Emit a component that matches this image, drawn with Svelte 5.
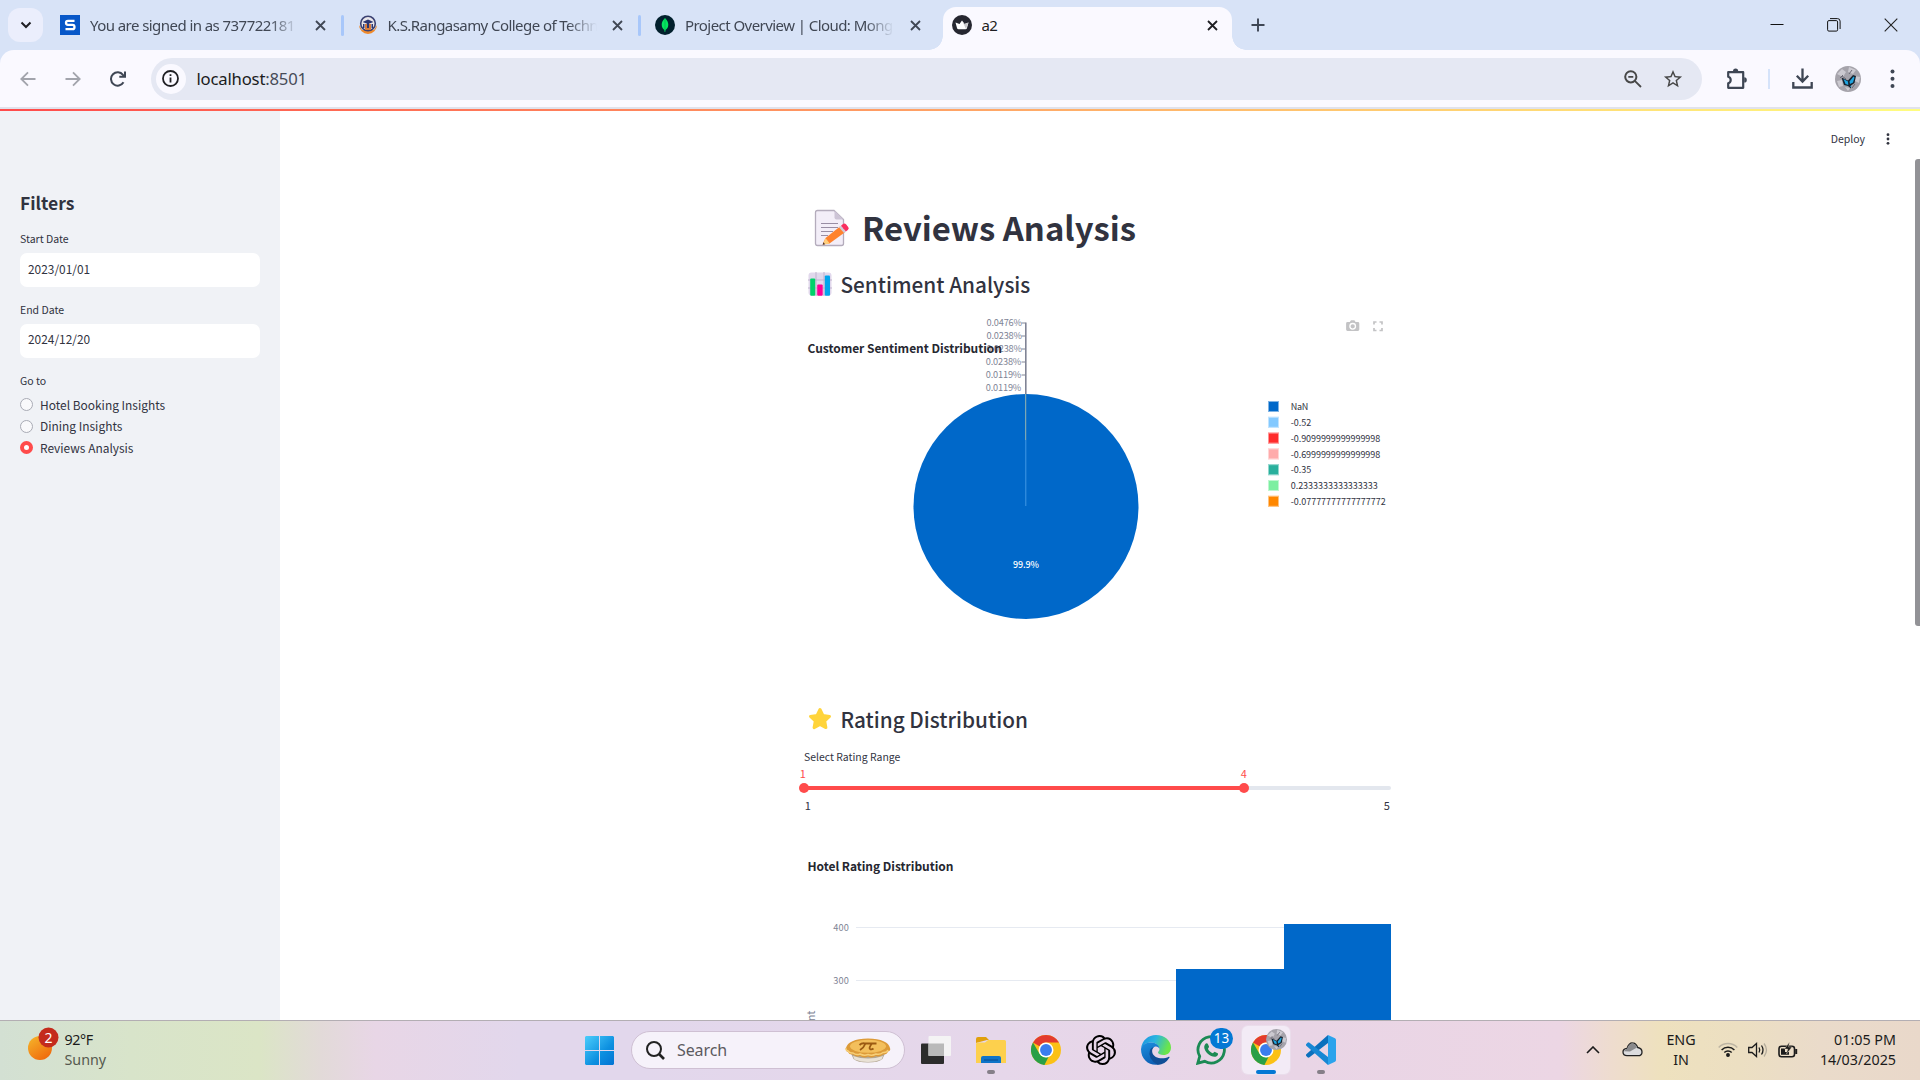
<script>
  const tabs = [
    { title: 'You are signed in as 737722181', icon: 's' },
    { title: 'K.S.Rangasamy College of Techn', icon: 'ksr' },
    { title: 'Project Overview | Cloud: Mong', icon: 'mongo' },
    { title: 'a2', icon: 'crown', active: true },
  ];
  const pages = ['Hotel Booking Insights', 'Dining Insights', 'Reviews Analysis'];
  const sliceLabels = ['0.0476%', '0.0238%', '0.0238%', '0.0238%', '0.0119%', '0.0119%'];
  const legend = [
    { name: 'NaN', color: '#0068c9', w: 17.5 },
    { name: '-0.52', color: '#83c9ff', w: 20.5 },
    { name: '-0.9099999999999998', color: '#ff2b2b', w: 89.5 },
    { name: '-0.6999999999999998', color: '#ffabab', w: 89.5 },
    { name: '-0.35', color: '#29b09d', w: 20.5 },
    { name: '0.2333333333333333', color: '#7defa1', w: 87 },
    { name: '-0.07777777777777772', color: '#ff8700', w: 95 },
  ];
</script>

{#snippet chrome()}
  <svg class="app" viewBox="0 0 48 48">
    <circle cx="24" cy="24" r="24" fill="#fbc116" />
    <path d="M24 0a24 24 0 0 1 20.8 12H24a12 12 0 0 0-10.4 6L3.2 12A24 24 0 0 1 24 0z" fill="#e33b2e" />
    <path d="M3.2 12 13.6 30A12 12 0 0 0 24 36h1.500L22 48A24 24 0 0 1 3.200 12z" fill="#2a9f47" />
    <path d="M34.400 30 24 48h-2.500l-3-9 5.500-3a12 12 0 0 0 10.400-6z" fill="#fbc116" />
    <path d="M13.600 30 A12 12 0 0 0 28 35.300L21.500 47.900 10 40z" fill="#2a9f47" />
    <circle cx="24" cy="24" r="12" fill="#fff" />
    <circle cx="24" cy="24" r="9.500" fill="#3b7ded" />
  </svg>
{/snippet}

{#snippet avatar()}
  <svg viewBox="0 0 26 26">
    <circle cx="13" cy="13" r="13" fill="#a5a3ab" />
    <path d="M2 8l5-5 4 3-3 5zM14 1l7 3-3 4-5-2zM19 10l6 1-1 6-4-2zM2 15l5-1 1 6-4 1zM10 21l5 1-2 3z" fill="#cbc9d0" />
    <path d="M7 10l4 3M17 4l-3 4M5 12l3-3M20 18l-3 4" stroke="#6b6975" stroke-width="1" />
    <path d="M6.500 11.500l6.500 3 5-5.500 3 1-1.500 7-3.500 2.500 0 3-3-2.500-4-1z" fill="#17232f" />
    <path d="M8.500 13l4.500 2.500 .3 3.500-2.800-1zM14.500 15.500l4-5 1 1-1.500 5-3 1.500zM15 20l1.500-.5-.5 2z" fill="#21a5e0" />
  </svg>
{/snippet}

<div class="screen">
  <div class="tabstrip">
    <div class="tabsearch"><svg width="12" height="8" viewBox="0 0 12 8"><path d="M1.500 1.500 6 6l4.500-4.500" fill="none" stroke="#1f1f23" stroke-width="2" /></svg></div>
    {#each tabs as t, i}
      <div class="tab" class:active={t.active}>
        <span class="fav">
          {#if t.icon === 's'}
            <svg viewBox="0 0 20 20"><path d="M0 0h20v20H0z" fill="#0757c8" /><path d="M14.500 5.800H8q-2 0-2 2t2 2h4.500q2 0 2 2.200t-2 2.200H5.500" fill="none" stroke="#fff" stroke-width="2.300" /></svg>
          {:else if t.icon === 'ksr'}
            <svg viewBox="0 0 20 20"><path d="M1 10a9 9 0 0 0 18 0l-3 5H4z" fill="#ef8a2c" /><circle cx="10" cy="8.500" r="7.300" fill="#e9e6ea" stroke="#3c4272" stroke-width="1.600" /><path d="M4.500 7 10 4.500 15.500 7 10 9z" fill="#2c3672" /><path d="M7 9h6v6H7z" fill="#d67b3d" /><path d="M9 8h2v5H9zM5 9h1.500v4H5zM13.500 9H15v4h-1.500z" fill="#2c3672" /></svg>
          {:else if t.icon === 'mongo'}
            <svg viewBox="0 0 20 20"><circle cx="10" cy="10" r="10" fill="#02202d" /><path d="M10 3c2.200 2.200 3.300 4.400 3.300 6.800 0 2.500-1.300 4.200-2.800 5.200L10.200 17h-.5l-.3-2C8 14 6.700 12.300 6.700 9.800 6.700 7.400 7.800 5.200 10 3z" fill="#05e660" /><path d="M10 4v11" stroke="#04a94c" stroke-width=".6" /></svg>
          {:else}
            <svg viewBox="0 0 20 20"><circle cx="10" cy="10" r="10" fill="#262730" /><path d="M3.500 7.500 7.500 9 10 5.500 12.500 9l4-1.500L15 13q-.3 1.200-1.500 1.200h-7Q5.300 14.200 5 13z" fill="#fff" /><path d="M10 5.500 12.500 9l4-1.500L14 14z" fill="#c9c9cc" /></svg>
          {/if}
        </span>
        <span class="title title{i}">{t.title}</span>
        <svg class="x" width="11" height="11" viewBox="0 0 11 11"><path d="M1 1l9 9M10 1l-9 9" stroke="currentColor" stroke-width="1.800" /></svg>
      </div>
    {/each}
    <svg class="plus" width="14" height="14" viewBox="0 0 14 14"><path d="M7 .500v13M.500 7h13" stroke="#3e4654" stroke-width="1.900" /></svg>
    <div class="winctl">
      <svg width="14" height="14" viewBox="0 0 14 14"><path d="M.500 6.500h13" stroke="#111" /></svg>
      <svg width="14" height="14" viewBox="0 0 14 14" fill="none" stroke="#111"><rect x=".600" y="2.600" width="10" height="10.500" rx="1.300" /><path d="M3 .6h7.500q2.600 0 2.600 2.600v7.800" /></svg>
      <svg width="14" height="14" viewBox="0 0 14 14"><path d="M.700.700l12.600 12.600M13.300.700.700 13.300" stroke="#222" stroke-width="1.100" /></svg>
    </div>
  </div>

  <div class="toolbar">
    <div class="nav">
      <svg width="16" height="16" viewBox="0 0 16 16" fill="none" stroke="#a2a4ac" stroke-width="1.800"><path d="M15.500 8H1.500M8 1.300 1.300 8 8 14.700" /></svg>
      <svg width="16" height="16" viewBox="0 0 16 16" fill="none" stroke="#a2a4ac" stroke-width="1.800"><path d="M.500 8h14M8 1.300 14.700 8 8 14.700" /></svg>
      <svg width="16" height="16" viewBox="0 0 16 16" fill="none" stroke="#3e4654" stroke-width="2"><path d="M13.500 11.300A6.700 6.700 0 1 1 13 3.800l1.500 1.800M15 .500v5.300H9.300" /></svg>
    </div>
    <div class="omni">
      <span class="info"><svg width="17" height="17" viewBox="0 0 17 17"><circle cx="8.500" cy="8.500" r="7.500" fill="none" stroke="#1f1f23" stroke-width="1.800" /><path d="M7.600 7.500h1.800v5H7.600zM7.600 4.300h1.800v1.800H7.600z" fill="#1f1f23" /></svg></span>
      <span class="url"><b>localhost</b>:8501</span>
      <svg class="mag" width="18" height="18" viewBox="0 0 18 18" fill="none" stroke="#474747" stroke-width="2"><circle cx="6.800" cy="6.800" r="5.600" /><path d="M10.800 10.800l6.200 6.200M4.300 6.800h5" stroke-width="1.800" /></svg>
      <svg width="20" height="20" viewBox="1 1 22 22" fill="#474747"><path d="M22 9.240l-7.190-.620L12 2 9.190 8.630 2 9.240l5.460 4.730L5.820 21 12 17.270 18.180 21l-1.630-7.030L22 9.240zM12 15.400l-3.760 2.270 1-4.280-3.320-2.880 4.380-.380L12 6.100l1.710 4.040 4.380.380-3.320 2.880 1 4.280L12 15.400z" /></svg>
    </div>
    <svg class="puzzle" width="22" height="22" viewBox="0 0 22 22"><path d="M2.200 4.200H17.200V19.800H2.200V15.200a3.300 3.300 0 0 0 0-6.400z" fill="none" stroke="#3e4654" stroke-width="2.200" stroke-linejoin="round" /><path d="M7 3.200a2.600 2.600 0 0 1 5.200 0zM18.200 9.300a2.600 2.600 0 0 1 0 5.200z" fill="#3e4654" /></svg>
    <i class="tsep"></i>
    <svg class="dl" width="21" height="21" viewBox="0 0 21 21" fill="none" stroke="#3e4654" stroke-width="2.300"><path d="M10.500.500v12.500M4.800 7.800l5.700 5.700 5.700-5.700M1.300 14v5.500h18.400V14" /></svg>
    <span class="ava">{@render avatar()}</span>
    <svg class="kebab" width="5" height="20" viewBox="0 0 5 20" fill="#3e4654"><circle cx="2.500" cy="2.500" r="2" /><circle cx="2.500" cy="9.800" r="2" /><circle cx="2.500" cy="17" r="2" /></svg>
  </div>
  <div class="rule"></div>
  <div class="deco"></div>

  <div class="body">
    <aside>
      <h2>Filters</h2>
      <label for="start">Start Date</label>
      <div class="field" id="start">2023/01/01</div>
      <label for="end">End Date</label>
      <div class="field end" id="end">2024/12/20</div>
      <p class="goto">Go to</p>
      {#each pages as p, i}
        <div class="radio"><i class:on={i === 2}></i><span class="r{i}">{p}</span></div>
      {/each}
    </aside>

    <main>
      <div class="column">
        <h1>
          <svg width="36" height="38" viewBox="0 0 36 38"><path d="M3.500 1.500H20L29.500 10.500V34.500q0 2-2 2h-24q-2 0-2-2v-31q0-2 2-2z" fill="#f3eef8" stroke="#b4acbc" stroke-width="1.300" /><path d="M20.500 1.500v7q0 2 2 2h7z" fill="#cdc4d6" /><path d="M7 14.500h17M7 18.500h17M7 22.500h12M7 26.500h7" stroke="#998ea4" stroke-width="1.200" /><path d="M11.500 29 26 17.500l5 5.800L15.500 34.500 8.500 35.500z" fill="#ff822d" /><path d="M11.500 29l4.300 5.400-7 1.400z" fill="#ffce7c" /><path d="M9.400 33.300l1.700 1.900-2.400.6z" fill="#402a32" /><path d="M25 18.300l2-1.600 5 6-2 1.400z" fill="#d3cbd8" /><path d="M27 16.700l2-1.600q1.700-1.300 3.200.4l2 2.400q1.300 1.600-.4 3l-1.900 1.500z" fill="#f92f60" /></svg>
          <span>Reviews Analysis</span>
        </h1>
        <h3 class="sent">
          <svg width="24" height="24" viewBox="0 0 24 24"><rect x=".500" y=".500" width="23" height="23" rx="3" fill="#e1d8ec" /><path d="M8 0v24M16 0v24M0 8h24M0 16h24" stroke="#c0b3ce" /><rect x="2.200" y="6.500" width="5" height="17.300" rx="1" fill="#00d26a" /><rect x="9.200" y="12.500" width="5.500" height="11.300" rx="1" fill="#ff0095" /><rect x="16.800" y="3.500" width="5.200" height="20.300" rx="1" fill="#00a6ed" /></svg>
          <span>Sentiment Analysis</span>
        </h3>
        <svg class="pie" width="587" height="388" viewBox="804 311 587 388">
          <g class="tick">
            {#each sliceLabels as l, i}
              <text x={986.5 - (i > 2 ? 0.7 : 0)} y={326.3 + i * 13} textLength="35.500">{l}</text>
              {#if i < 5}<path d="M1021.500 {323 + i * 13}h4" stroke="#808495" />{/if}
            {/each}
          </g>
          <path d="M1025.800 322.500V395" stroke="#808495" stroke-width="1.600" />
          <text class="ctitle" x="807.500" y="353" textLength="194.500">Customer Sentiment Distribution</text>
          <circle cx="1026" cy="506.500" r="112.500" fill="#0068c9" />
          <path d="M1025.700 394V440" stroke="#a9bfae" stroke-width=".9" />
          <path d="M1025.800 440V506" stroke="#83c9ff" stroke-width=".5" />
          <text class="pct" x="1013" y="567.500" textLength="26">99.9%</text>
          <g fill="#c3c3c5">
            <path d="M1347.500 322h2.300l1.200-1.700h3.400l1.200 1.700h2.300q1.400 0 1.400 1.400v6.200q0 1.400-1.400 1.400h-10.400q-1.400 0-1.400-1.400v-6.200q0-1.400 1.400-1.400z" />
            <circle cx="1352.700" cy="326.300" r="2.800" fill="none" stroke="#fff" stroke-width="1.300" />
          </g>
          <path d="M1374 324.500V322h2.500M1379.500 322h2.500v2.500M1382 328v2.500h-2.500M1376.500 330.500h-2.500V328" fill="none" stroke="#c3c3c5" stroke-width="1.700" />
          {#each legend as l, i}
            <rect x="1268" y={401 + i * 15.8} width="11" height="11" fill={l.color} />
            <rect x="1268.500" y={401.5 + i * 15.8} width="10" height="10" fill="none" stroke="#fff" stroke-opacity=".5" />
            <text class="leg" x="1290.700" y={410.2 + i * 15.8} textLength={l.w}>{l.name}</text>
          {/each}
        </svg>
        <h3 class="rate">
          <svg width="24" height="24" viewBox="0 0 24 24"><path d="M12 2.500l2.900 6 6.600.9-4.800 4.600 1.200 6.600L12 17.500l-5.900 3.100 1.200-6.600-4.800-4.600 6.600-.9z" fill="#ffd43b" stroke="#ffd43b" stroke-width="3" stroke-linejoin="round" /></svg>
          <span>Rating Distribution</span>
        </h3>
        <div class="slabel">Select Rating Range</div>
        <svg class="slider" width="597" height="50" viewBox="799 766 597 50">
          <path d="M1244 788H1389" stroke="#e3e7ee" stroke-width="4" stroke-linecap="round" />
          <path d="M804 788H1244" stroke="#ff4b4b" stroke-width="4" />
          <circle cx="804" cy="788" r="5" fill="#ff4b4b" />
          <circle cx="1244" cy="788" r="5" fill="#ff4b4b" />
          <text x="799.700" y="778" fill="#ff4b4b">1</text>
          <text x="1240.700" y="778" fill="#ff4b4b">4</text>
          <text x="804.700" y="810" fill="#31333f">1</text>
          <text x="1383.700" y="810" fill="#31333f">5</text>
        </svg>
        <svg class="hist" width="587" height="170" viewBox="804 850 587 170">
          <text class="ctitle" x="807.500" y="870.700" textLength="146">Hotel Rating Distribution</text>
          <path d="M856 927.500H1391M856 980.500H1391" stroke="#e6eaf1" stroke-width="1.200" />
          <text class="tick" x="833.300" y="931" textLength="15.500">400</text>
          <text class="tick" x="833.300" y="984" textLength="15.500">300</text>
          <path d="M1176 1020V969H1284V924H1391V1020z" fill="#0068c9" />
          <text class="axis" transform="translate(815 1010.500) rotate(-90)" text-anchor="end">count</text>
        </svg>
      </div>
      <div class="deploy"><span>Deploy</span><svg width="4" height="12" viewBox="0 0 4 12" fill="#31333f"><circle cx="2" cy="1.700" r="1.400" /><circle cx="2" cy="6" r="1.400" /><circle cx="2" cy="10.300" r="1.400" /></svg></div>
      <i class="scroll"></i>
    </main>
  </div>

  <footer>
    <div class="weather">
      <svg width="34" height="34" viewBox="0 0 34 34"><defs><linearGradient id="sun" x1="0" y1="0" x2=".7" y2="1"><stop offset="0" stop-color="#f5b82c" /><stop offset="1" stop-color="#f06a0c" /></linearGradient></defs><circle cx="14" cy="21" r="12" fill="url(#sun)" /><circle cx="22.500" cy="10.500" r="10" fill="#c42b1c" /><text x="22.500" y="15.500" text-anchor="middle" fill="#fff" font-size="14">2</text></svg>
      <div><p class="temp">92°F</p><p class="cond">Sunny</p></div>
    </div>
    <div class="apps">
      <svg class="win" width="29" height="29" viewBox="0 0 29 29"><defs><linearGradient id="w" x1="0" y1="0" x2="1" y2="1"><stop offset="0" stop-color="#4ccdfb" /><stop offset=".6" stop-color="#0d90e0" /><stop offset="1" stop-color="#0373d3" /></linearGradient></defs><path d="M1 0h13v14H0V1zM15 0h13l1 1v13H15zM0 15h14v14H1l-1-1zM15 15h14v13l-1 1H15z" fill="url(#w)" /></svg>
      <div class="search">
        <svg width="19" height="19" viewBox="0 0 19 19" fill="none" stroke="#222" stroke-width="2"><circle cx="8" cy="8" r="7" /><path d="M13 13l5 5" stroke-width="2.600" /></svg>
        <span>Search</span>
        <svg class="food" width="46" height="25" viewBox="0 0 46 25"><path d="M4 11h38l-4.500 10q-4 3.500-14.500 3.500T8.500 21z" fill="#b3a793" /><path d="M8 18q15 5 30 0l-1.500 3.500q-13.500 5-27 0z" fill="#e9e2d6" /><path d="M1 10q-1 3 2 4 1 3 5 2.500 3 3 7 1.500 4 2.500 8 .5 4 2 8-.5 4 1.500 7-1.500 4 .5 5-3 3-1 2-3.500Q43 1 23 .500 3 1 1 10z" fill="#dc9a38" /><path d="M1 10q-.5 2.200 2 3 1.500 2.500 5 2 3 2.500 7 1 4 2 8 .5 4 1.500 8-.5 4 1 7-1.500 4 .3 5-2.500" fill="none" stroke="#f7cf78" stroke-width="1.500" /><ellipse cx="23" cy="8.300" rx="18" ry="6.500" fill="#f3bf5c" /><path d="M14.500 7q2-2 5-1.700l12 .2M20.500 5.500q-1.500 4-5.500 6.500M27 5.500q-4 5-1.500 5.800 1.500.4 3-.8" fill="none" stroke="#9b5a12" stroke-width="1.800" /></svg>
      </div>
      <svg class="tv" width="30" height="28" viewBox="0 0 30 28"><rect y="7.500" width="23" height="20.500" rx="1" fill="#2c2c2c" /><rect x="7.500" width="22.500" height="20" rx="1" fill="#f4f3f4" /><path d="M7.500 7.500H23V20H7.500z" fill="#b9b9b9" /></svg>
      <div class="cell">
        <svg class="app" viewBox="0 0 30 30"><path d="M0 4q0-2 2-2h8l3 3h-2L0 8z" fill="#e0a00c" /><path d="M0 9q0-1.500 1.500-1.500H9L12 5h16.500Q30 5 30 6.500V28H0z" fill="#fdd04d" /><path d="M5 28v-5q0-2 2-2h16q2 0 2 2v5z" fill="#0f74c8" /><path d="M8 25h14" stroke="#0b4a8c" /></svg>
        <i class="dot"></i>
      </div>
      <div class="cell">{@render chrome()}</div>
      <div class="cell"><svg class="app" viewBox="0 0 24 24"><path d="M22.2819 9.8211a5.9847 5.9847 0 0 0-.5157-4.9108 6.0462 6.0462 0 0 0-6.5098-2.9A6.0651 6.0651 0 0 0 4.9807 4.1818a5.9847 5.9847 0 0 0-3.9977 2.9 6.0462 6.0462 0 0 0 .7427 7.0966 5.98 5.98 0 0 0 .511 4.9107 6.051 6.051 0 0 0 6.5146 2.9001A5.9847 5.9847 0 0 0 13.2599 24a6.0557 6.0557 0 0 0 5.7718-4.2058 5.9894 5.9894 0 0 0 3.9977-2.9001 6.0557 6.0557 0 0 0-.7475-7.0729zm-9.022 12.6081a4.4755 4.4755 0 0 1-2.8764-1.0408l.1419-.0804 4.7783-2.7582a.7948.7948 0 0 0 .3927-.6813v-6.7369l2.02 1.1686a.071.071 0 0 1 .038.052v5.5826a4.504 4.504 0 0 1-4.4945 4.4944zm-9.6607-4.1254a4.4708 4.4708 0 0 1-.5346-3.0137l.142.0852 4.783 2.7582a.7712.7712 0 0 0 .7806 0l5.8428-3.3685v2.3324a.0804.0804 0 0 1-.0332.0615L9.74 19.9502a4.4992 4.4992 0 0 1-6.1408-1.6464zM2.3408 7.8956a4.485 4.485 0 0 1 2.3655-1.9728V11.6a.7664.7664 0 0 0 .3879.6765l5.8144 3.3543-2.0201 1.1685a.0757.0757 0 0 1-.071 0l-4.8303-2.7865A4.504 4.504 0 0 1 2.3408 7.872zm16.5963 3.8558L13.1038 8.364 15.1192 7.2a.0757.0757 0 0 1 .071 0l4.8303 2.7913a4.4944 4.4944 0 0 1-.6765 8.1042v-5.6772a.79.79 0 0 0-.407-.667zm2.0107-3.0231l-.142-.0852-4.7735-2.7818a.7759.7759 0 0 0-.7854 0L9.409 9.2297V6.8974a.0662.0662 0 0 1 .0284-.0615l4.8303-2.7866a4.4992 4.4992 0 0 1 6.6802 4.66zM8.3065 12.863l-2.02-1.1638a.0804.0804 0 0 1-.038-.0567V6.0742a4.4992 4.4992 0 0 1 7.3757-3.4537l-.142.0805L8.704 5.459a.7948.7948 0 0 0-.3927.6813zm1.0976-2.3654l2.602-1.4998 2.6069 1.4998v2.9994l-2.5974 1.4997-2.6067-1.4997Z" /></svg></div>
      <div class="cell">
        <svg class="app" viewBox="0 0 30 30"><defs><linearGradient id="e1" x1="0" y1="0" x2="1" y2=".3"><stop offset="0" stop-color="#1a8fe0" /><stop offset=".5" stop-color="#2bb5e0" /><stop offset="1" stop-color="#6be54a" /></linearGradient><linearGradient id="e2" x1="0" y1="0" x2=".4" y2="1"><stop offset="0" stop-color="#1c90df" /><stop offset="1" stop-color="#0d60b5" /></linearGradient></defs>
          <path d="M0 14C1 5 7.500 0 15 0c9 0 15 6 15 12.500 0 5-3.500 7.500-7.500 7.500-3 0-5.500-1-5.500-2.500 0-1 1.500-1.500 1.500-3.500C18.500 11 15 7.500 10 7.500 5 7.500 1.500 10 0 14z" fill="url(#e1)" />
          <path d="M0 14C1 9.500 5 7.300 10 7.500c5 .2 8.500 3 8.500 6.500-.5-1.500-2-2.500-3.500-2.500-2.500 0-4.500 2.500-4.500 6 0 5 4 10 9.500 11.500C10 32 0 26 0 14z" fill="url(#e2)" />
          <path d="M9 15q-1.500 4 .5 8t7 6.800Q24 30 28.500 22.500q.3-1-.7-.7c-6 3-15 1.700-16.500-4.300-.5-2 0-4 1.500-5.500Q10 12.500 9 15z" fill="#0f4f97" />
        </svg>
      </div>
      <div class="cell">
        <svg class="app" viewBox="0 0 30 30"><path d="M1.800 28.200l1.900-6.900A13.200 13.200 0 1 1 8.700 26.300z" fill="none" stroke="#1b8a54" stroke-width="2.800" /><path d="M9 9.500c1-1.800 2.500-1.500 3-.3l1 2.300c.3.800-1.200 2-1 2.500 1 2 2.700 3.500 4.700 4.300.5.200 1.500-1.700 2.300-1.400l2.700 1.300c.8.400.3 2.500-1.500 3.300-4 1.700-12-4-12-9.500 0-1 .3-1.800.8-2.500z" fill="#1b8a54" /></svg>
        <span class="badge">13</span>
      </div>
      <div class="cell current">{@render chrome()}<span class="who">{@render avatar()}</span><i class="dot"></i></div>
      <div class="cell">
        <svg class="app" viewBox="0 0 30 30"><path d="M22 0l7 3.300q1 .5 1 1.700v20q0 1.200-1 1.700L22 30V0z" fill="#2ba3ec" /><path d="M22 0v8L3.500 22.300q-1 .8-2 0L.300 21q-.7-1 0-1.800z" fill="#0b70bd" /><path d="M22 30v-8L3.500 7.700q-1-.8-2 0L.300 9q-.7 1 0 1.800z" fill="#1787d4" /></svg>
        <i class="dot"></i>
      </div>
    </div>
    <div class="tray">
      <svg class="up" width="14" height="8" viewBox="0 0 14 8"><path d="M1 7l6-6 6 6" fill="none" stroke="#1b1b1b" stroke-width="1.600" /></svg>
      <svg class="cloud" width="21" height="15" viewBox="0 0 21 15"><path d="M5 13.700q-4 0-4-3.600 0-3.400 4-3.700Q7 .800 10.500.900q3.300 0 5.200 4.600 4.300.8 4.300 4.400 0 3.800-4 3.800z" fill="#dcdcde" stroke="#222" stroke-width="1.300" /><path d="M5 6.700Q7 1.600 10.500 1.600q3 0 4.500 3.900L8 9.500 2 9.300Q2.500 7 5 6.700z" fill="#8a8a8c" /></svg>
      <div class="lang"><p>ENG</p><p>IN</p></div>
      <svg class="wifi" width="20" height="15" viewBox="0 0 20 15" fill="none" stroke="#1b1b1b" stroke-width="1.500"><path d="M.700 5.500a13 13 0 0 1 18.600 0" stroke="#bdb5a3" /><path d="M3.600 8a9 9 0 0 1 12.800 0M6.300 10.500a5.300 5.300 0 0 1 7.400 0" /><circle cx="10" cy="13" r="1.200" fill="#1b1b1b" /></svg>
      <svg class="vol" width="20" height="16" viewBox="0 0 20 16" fill="none" stroke="#1b1b1b" stroke-width="1.300"><path d="M.700 5.500H4L8.500 1.500v13L4 10.500H.700zM11 5.500q1.500 2.500 0 5M13.500 3.500q3 4.500 0 9" /><path d="M16 1.500q5 6.500 0 13" stroke="#b5ad9c" /></svg>
      <svg class="bat" width="20" height="16" viewBox="0 0 20 16"><rect x="1" y="4.200" width="15.500" height="10.500" rx="2.500" fill="none" stroke="#1b1b1b" stroke-width="1.600" /><path d="M18.200 7v5" stroke="#1b1b1b" stroke-width="2" /><path d="M3 6.500h4v3.500h4v2.800H3z" fill="#1b1b1b" /><path d="M11.500 0 6.500 7h3.200L8.500 12 14 5h-3.500z" fill="#1b1b1b" stroke="#e9dcc5" stroke-width=".4" /></svg>
      <div class="clock"><p class="time">01:05 PM</p><p class="date">14/03/2025</p></div>
    </div>
  </footer>
</div>

<style>
  :global(body) { overflow: hidden; }
  h1, h2, h3, p { margin: 0; }
  .screen { width: 1920px; height: 1080px; display: flex; flex-direction: column; background: #d8e3f7; overflow: hidden; font-family: "Noto Sans", sans-serif; }
  .screen svg { display: block; flex: none; }
  .screen span { white-space: nowrap; }

  .tabstrip { height: 50px; flex: none; display: flex; align-items: center; background: #d8e3f7; }
  .tabsearch { width: 35px; height: 34px; margin: 0 3px 0 8px; border-radius: 12px; background: #ebeefc; display: flex; align-items: center; justify-content: center; flex: none; }
  .tab { width: 297.500px; height: 50px; flex: none; display: flex; align-items: center; position: relative; color: #404754; }
  .tab:nth-child(-n + 4)::after { content: ''; width: 3px; height: 21px; margin-left: auto; border-radius: 2px; background: #a8c7fa; }
  .tab:nth-child(4)::after { background: none; }
  .fav { width: 20px; height: 20px; margin-left: 14px; flex: none; }
  .fav svg { width: 20px; height: 20px; }
  .title { width: 209px; margin-left: 10px; overflow: hidden; font-size: 15px; line-height: 24px; letter-spacing: -.56px; -webkit-mask-image: linear-gradient(90deg, #000 86%, transparent); mask-image: linear-gradient(90deg, #000 86%, transparent); }
  .x { margin-left: 15.500px; }
  .active { width: 289px; height: 43px; margin: 7px 0 0 4px; border-radius: 13px 13px 0 0; background: #faf9ff; color: #1f1f23; }
  .active::before { content: ''; position: absolute; left: -14px; right: -14px; bottom: 0; height: 14px; background: radial-gradient(circle at 0 0, transparent 13.500px, #faf9ff 14px) left / 14px 14px no-repeat, radial-gradient(circle at 100% 0, transparent 13.500px, #faf9ff 14px) right / 14px 14px no-repeat; }
  .active .fav { margin: 0 0 7px 9px; }
  .active .title { width: 214px; margin-bottom: 7px; mask-image: none; -webkit-mask-image: none; }
  .active .x { margin: 0 0 7px 11px; }
  .plus { margin-left: 19px; }
  .winctl { margin-left: auto; padding-right: 22px; display: flex; gap: 43px; }

  .toolbar { height: 57px; flex: none; display: flex; align-items: center; background: #faf9ff; border-radius: 14px 14px 0 0; }
  .nav { width: 150.500px; flex: none; display: flex; gap: 29px; padding-left: 19.500px; box-sizing: border-box; }
  .omni { width: 1551.500px; height: 42px; flex: none; display: flex; align-items: center; border-radius: 21px; background: #e5e8f3; box-sizing: border-box; padding: 0 19.500px 0 5px; }
  .info { width: 30px; height: 30px; border-radius: 50%; background: #faf9ff; display: flex; align-items: center; justify-content: center; }
  .url { margin-left: 11px; font-size: 16.700px; letter-spacing: -.2px; color: #474b57; }
  .url b { font-weight: 400; color: #1a1b20; }
  .mag { margin: 0 21px 0 auto; }
  .puzzle { margin-left: 24px; }
  .tsep { width: 2px; height: 20px; margin: 0 22px 0 20px; background: #d5e3fa; }
  .ava { width: 26px; height: 26px; margin-left: 22px; }
  .kebab { margin-left: 29px; }
  .rule { height: 2px; flex: none; background: #e0e2ec; }
  .deco { height: 2px; flex: none; background: linear-gradient(90deg, #ff4b4b, #fffd80); }

  .body { height: 909px; flex: none; display: flex; font-family: "Noto Sans CJK JP", "Noto Sans CJK SC", sans-serif; color: #31333f; }
  aside { width: 280px; flex: none; padding: 79px 20px 0; box-sizing: border-box; background: #f0f2f6; }
  aside h2 { font-size: 17.500px; font-weight: 600; line-height: 26px; }
  label { display: block; font-size: 10.500px; line-height: 18px; margin-top: 14px; }
  .field { height: 34px; margin-top: 5px; padding-left: 8px; border-radius: 7px; background: #fff; font-size: 11.900px; line-height: 32px; }
  .end { line-height: 30px; }
  .goto { font-size: 10.500px; line-height: 18px; padding-top: 14px; margin-bottom: 4px; }
  .radio { display: flex; align-items: center; height: 21.500px; font-size: 11.950px; line-height: 20px; gap: 7px; }
  .radio i { width: 13px; height: 13px; border-radius: 50%; box-sizing: border-box; border: 1px solid #a9abb5; background: #f9f9fb; }
  .radio i.on { border: 4.500px solid #ff4b4b; background: #fff; }

  main { flex: 1; position: relative; display: flex; justify-content: center; overflow: hidden; background: #fff; }
  .column { width: 587px; padding-right: 5px; height: 909px; display: flex; flex-direction: column; }
  h1 { display: flex; align-items: center; height: 44px; padding: 95px 0 0 10px; font-size: 32.850px; font-weight: 700; line-height: 44px; }
  h1 span { margin: 0 0 3px 12px; }
  h3 { display: flex; align-items: center; height: 32px; flex: none; padding-left: 4px; font-size: 20.750px; font-weight: 500; line-height: 32px; }
  h3 span { margin-left: 8.500px; }
  .sent { margin-top: 18px; }
  .pie { margin-top: 11px; }
  .rate { margin-top: 4px; }
  .slabel { font-size: 10.450px; line-height: 18px; margin: 13px 0 0; }
  .slider { margin: 0 -5px; }
  .slider text { font-size: 11px; }
  .hist { margin-top: 34px; }
  .ctitle { font-size: 12px; font-weight: 700; fill: #262730; }
  .tick { font-size: 9.200px; fill: #808495; }
  .leg { font-size: 9px; fill: #31333f; }
  .pct { font-size: 9px; font-weight: 500; fill: #fff; }
  .axis { font-size: 11px; fill: #808495; }
  .deploy { position: absolute; top: 19px; right: 30px; display: flex; align-items: center; gap: 21px; font-size: 10.500px; line-height: 18px; }
  .scroll { position: absolute; top: 48px; right: 0; width: 5px; height: 467px; border-radius: 3px 0 0 3px; background: #929296; }

  footer { height: 60px; flex: none; box-sizing: border-box; border-top: 1px solid #b3aeb3; display: flex; position: relative; color: #1b1b1b; font-size: 14.300px;
    background: linear-gradient(90deg, #d3e0d3 0, #d8e4ca 130px, #dbe5c6 260px, #e2dad8 320px, #e8d6e6 375px, #e2d7ec 520px, #e2d7ec 640px, #e6d7ea 1000px, #e9d5e6 1300px, #ecd6e4 1560px, #eedccf 1610px, #eee1be 1660px, #ecdfc2 1740px, #eadbca 1820px, #e9d8ca 100%); }
  footer p { line-height: 20px; }
  .weather { width: 585px; flex: none; display: flex; padding: 7px 0 0 26px; box-sizing: border-box; }
  .weather svg { margin-top: -1px; }
  .weather div { margin: 2px 0 0 4.500px; }
  .temp { letter-spacing: -.4px; }
  .cond { color: #55594f; }
  .apps { display: flex; align-items: center; height: 58px; }
  .search { width: 274px; height: 38px; margin: 0 16px 0 17px; box-sizing: border-box; border: 1px solid #cfc0d3; border-radius: 19px; background: #f6f2fa; display: flex; align-items: center; padding: 0 13px 0 14px; }
  .search span { margin-left: 12px; font-size: 16px; color: #5c5a60; letter-spacing: -.1px; }
  .food { margin-left: auto; }
  .cell { width: 48px; height: 48px; margin-left: 7px; display: flex; align-items: center; justify-content: center; position: relative; border-radius: 6px; }
  .tv { margin-right: 9px; }
  .app { width: 30px; height: 30px; }
  .dot { position: absolute; left: 20px; bottom: 0; width: 8px; height: 4px; border-radius: 2px; background: #857f88; }
  .current { background: #f3ebf6; box-shadow: 0 0 0 1px #eaddeb; }
  .current .dot { left: 14px; width: 20px; background: #0478d4; }
  .who { position: absolute; left: 24px; top: 3px; width: 21px; height: 21px; }
  .badge { position: absolute; left: 23px; top: 2px; width: 23px; height: 21px; border-radius: 11px; background: #0478d4; color: #fff; text-align: center; font-size: 13.500px; line-height: 21px; }
  .tray { flex: 1; display: flex; align-items: center; justify-content: flex-end; height: 57px; padding-right: 24px; }
  .lang { width: 40px; text-align: center; margin-left: 18px; }
  .cloud { margin-left: 22px; }
  .wifi { margin-left: 17px; }
  .vol { margin-left: 9.500px; }
  .bat { margin-left: 10.500px; }
  .clock { width: 98px; text-align: right; }
</style>
